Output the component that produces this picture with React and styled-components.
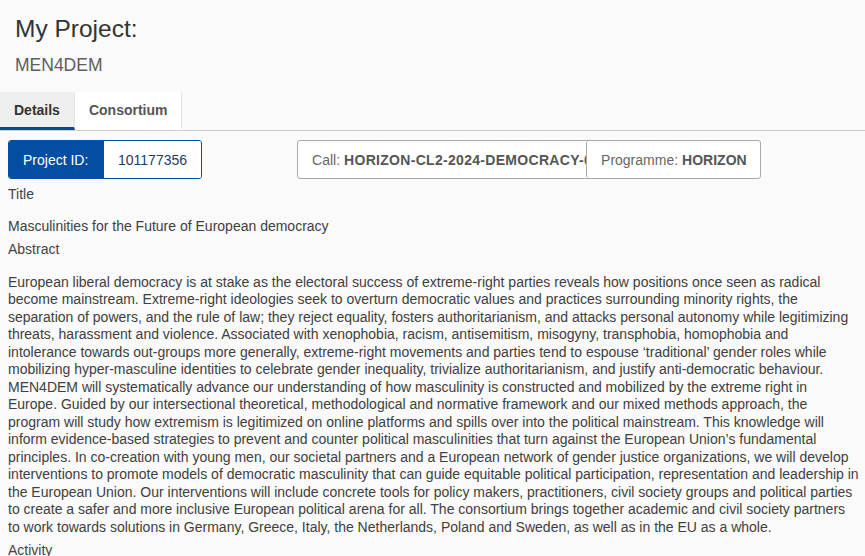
import styled, { createGlobalStyle } from 'styled-components';

const GlobalStyle = createGlobalStyle`
  body {
    margin: 0;
    background: #fafafa;
    font-family: "Liberation Sans", Arial, sans-serif;
    color: #333;
  }
`;

const Page = styled.div`
  width: 865px;
  height: 556px;
  overflow: hidden;
`;

const Header = styled.header`
  padding: 15px 15px 0;
`;

const Heading = styled.h1`
  margin: 0;
  font-size: 24.5px;
  font-weight: 400;
  line-height: 28px;
  color: #333;
`;

const Acronym = styled.div`
  margin-top: 12px;
  font-size: 17.5px;
  line-height: 20px;
  color: #5e5e5e;
`;

const Tabs = styled.nav`
  display: flex;
  margin-top: 17px;
  border-bottom: 1px solid #cfcfcf;
`;

const Tab = styled.button`
  height: 38px;
  padding: 0 ${(p) => p.$px}px;
  border: 0;
  border-right: 1px solid #e4e4e4;
  border-bottom: 3px solid ${(p) => (p.$active ? '#0b4a8f' : 'transparent')};
  background: ${(p) => (p.$active ? '#efefef' : '#fff')};
  font-family: inherit;
  font-size: 14px;
  font-weight: 700;
  color: ${(p) => (p.$active ? '#333' : '#555')};
  cursor: pointer;
`;

const Content = styled.main`
  padding: 9px 0 0 8px;
`;

const InfoRow = styled.div`
  display: flex;
  align-items: center;
`;

const IdBadge = styled.div`
  display: flex;
  height: 37px;
  border: 1px solid #034ea2;
  border-radius: 3px;
  overflow: hidden;
  font-size: 14px;
`;

const IdLabel = styled.span`
  display: flex;
  align-items: center;
  width: 95px;
  padding-left: 14px;
  box-sizing: border-box;
  background: #034ea2;
  color: #fff;
`;

const IdValue = styled.span`
  display: flex;
  align-items: center;
  padding: 0 14px;
  background: #fff;
  color: #1f3b66;
`;

const Facts = styled.div`
  display: flex;
  margin-left: 95px;
  height: 37px;
  border: 1px solid #a9a9a9;
  border-radius: 3px;
  background: #fff;
  font-size: 14px;
  color: #666;
`;

const Fact = styled.div`
  display: flex;
  align-items: center;
  width: ${(p) => p.$w}px;
  padding-left: 14px;
  box-sizing: border-box;
  white-space: nowrap;
  overflow: hidden;
  border-left: ${(p) => (p.$divider ? '1px solid #a9a9a9' : '0')};
  border-radius: 3px;

  b {
    margin-left: 4px;
    color: #555;
    letter-spacing: ${(p) => p.$track || 0}px;
  }
`;

const Label = styled.div`
  margin-top: ${(p) => p.$top}px;
  font-size: 14px;
  line-height: 17px;
  color: #444;
`;

const Value = styled.p`
  margin: ${(p) => p.$top}px 0 0;
  font-size: 14px;
  line-height: 17.5px;
  color: #404040;
`;

const Line = styled.span`
  display: block;
  white-space: nowrap;
`;

const tabs = [
  { name: 'Details', px: 14, active: true },
  { name: 'Consortium', px: 14 },
];

const abstractLines = [
  'European liberal democracy is at stake as the electoral success of extreme-right parties reveals how positions once seen as radical',
  'become mainstream. Extreme-right ideologies seek to overturn democratic values and practices surrounding minority rights, the',
  'separation of powers, and the rule of law; they reject equality, fosters authoritarianism, and attacks personal autonomy while legitimizing',
  'threats, harassment and violence. Associated with xenophobia, racism, antisemitism, misogyny, transphobia, homophobia and',
  'intolerance towards out-groups more generally, extreme-right movements and parties tend to espouse \u2018traditional\u2019 gender roles while',
  'mobilizing hyper-masculine identities to celebrate gender inequality, trivialize authoritarianism, and justify anti-democratic behaviour.',
  'MEN4DEM will systematically advance our understanding of how masculinity is constructed and mobilized by the extreme right in',
  'Europe. Guided by our intersectional theoretical, methodological and normative framework and our mixed methods approach, the',
  'program will study how extremism is legitimized on online platforms and spills over into the political mainstream. This knowledge will',
  'inform evidence-based strategies to prevent and counter political masculinities that turn against the European Union\u2019s fundamental',
  'principles. In co-creation with young men, our societal partners and a European network of gender justice organizations, we will develop',
  'interventions to promote models of democratic masculinity that can guide equitable political participation, representation and leadership in',
  'the European Union. Our interventions will include concrete tools for policy makers, practitioners, civil society groups and political parties',
  'to create a safer and more inclusive European political arena for all. The consortium brings together academic and civil society partners',
  'to work towards solutions in Germany, Greece, Italy, the Netherlands, Poland and Sweden, as well as in the EU as a whole.',
];

export default function App() {
  return (
    <Page>
      <GlobalStyle />
      <Header>
        <Heading>My Project:</Heading>
        <Acronym>MEN4DEM</Acronym>
      </Header>
      <Tabs>
        {tabs.map((t) => (
          <Tab key={t.name} $active={t.active} $px={t.px}>
            {t.name}
          </Tab>
        ))}
      </Tabs>
      <Content>
        <InfoRow>
          <IdBadge>
            <IdLabel>Project ID:</IdLabel>
            <IdValue>101177356</IdValue>
          </IdBadge>
          <Facts>
            <Fact $w={288} $track={0.3}>
              Call:<b>HORIZON-CL2-2024-DEMOCRACY-01</b>
            </Fact>
            <Fact $w={174} $divider>
              Programme:<b>HORIZON</b>
            </Fact>
          </Facts>
        </InfoRow>
        <Label $top={7}>Title</Label>
        <Value $top={15}>Masculinities for the Future of European democracy</Value>
        <Label $top={5}>Abstract</Label>
        <Value $top={16}>
          {abstractLines.map((l, i) => (
            <Line key={i}>{l}</Line>
          ))}
        </Value>
        <Label $top={6}>Activity</Label>
      </Content>
    </Page>
  );
}
